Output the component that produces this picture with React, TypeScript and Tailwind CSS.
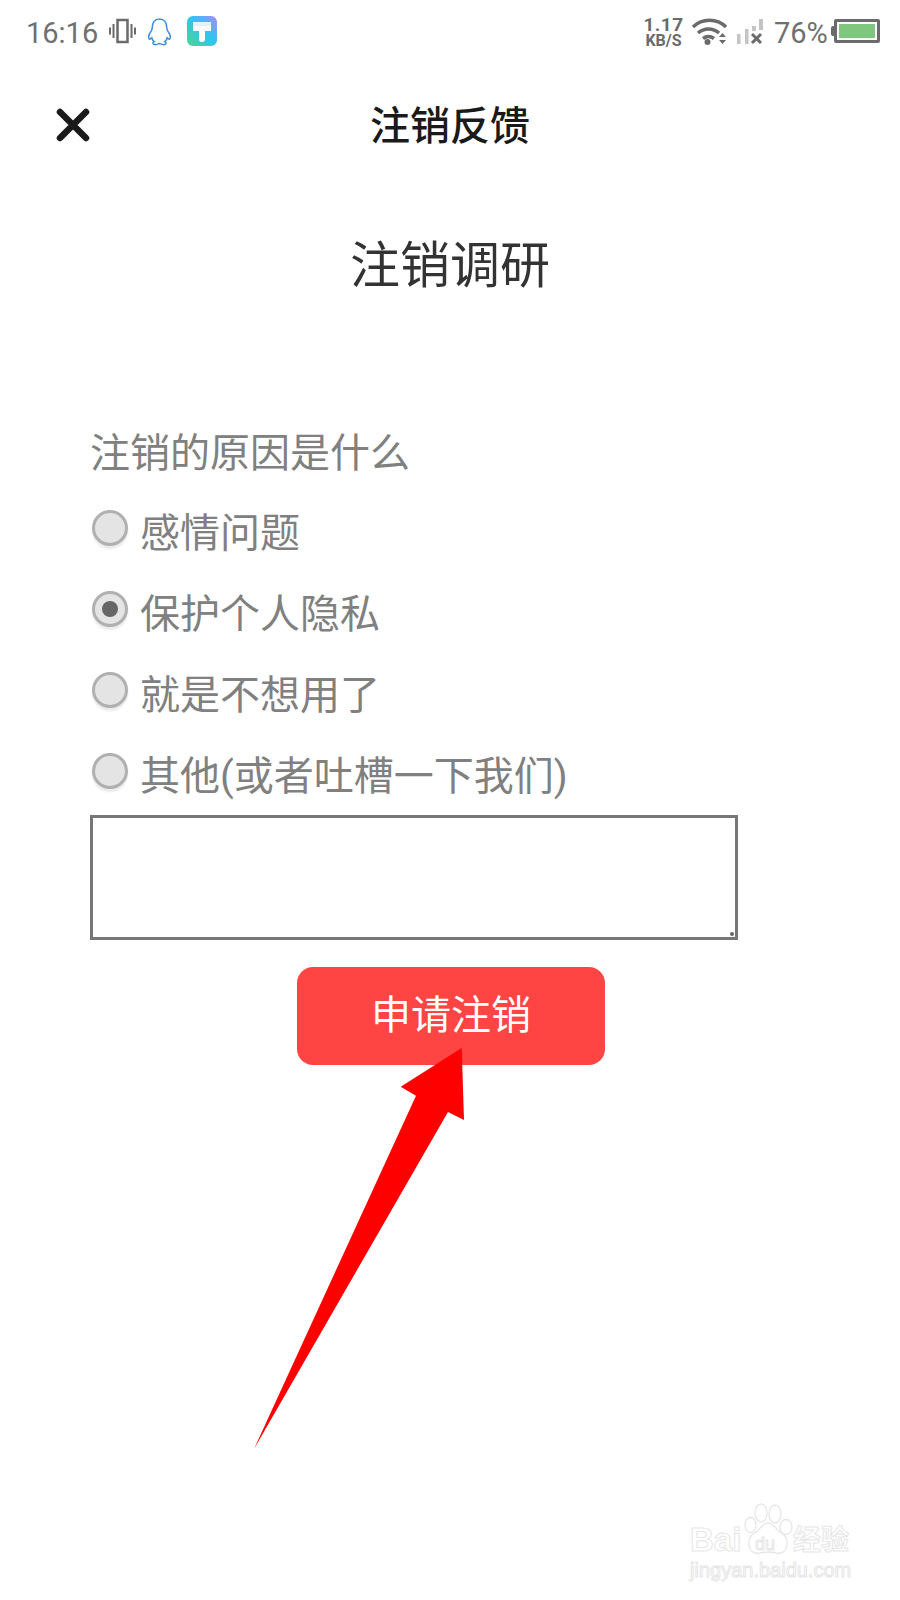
const cjk = "font-['Roboto','Noto_Sans_CJK_SC','Noto_Sans',sans-serif]";

function Radio({ checked }: { checked?: boolean }) {
  return (
    <span className="flex h-[36px] w-[36px] shrink-0 items-center justify-center rounded-full border-[3px] border-[#b0b0b0] bg-[#e4e4e4] shadow-[0_3px_2px_#ebebeb]">
      {checked && <span className="h-[16px] w-[16px] rounded-full bg-[#666666]" />}
    </span>
  );
}

function Option({ label, checked }: { label: string; checked?: boolean }) {
  return (
    <div className="flex h-[81px] items-center gap-[12px]">
      <div className="-mt-[12px]">
        <Radio checked={checked} />
      </div>
      <span className="text-[40px] leading-[50px] text-[#808080]">{label}</span>
    </div>
  );
}

function StatusBar() {
  return (
    <div className="flex h-[66px] items-center justify-between pb-[4px] pl-[26px] pr-[20px]">
      <div className="flex items-center">
        <span className="mt-[3px] text-[29px] leading-[36px] text-[#707070]">16:16</span>
        <svg width="27" height="26" viewBox="0 0 27 26" className="ml-[11px]" fill="none" stroke="#6b6b6b">
          <rect x="8.500" y="2" width="10" height="22" strokeWidth="2.500" />
          <path d="M4.500 6v14M1 9.500v7M22.500 6v14M26 9.500v7" strokeWidth="2" />
        </svg>
        <svg width="27" height="29" viewBox="0 0 28 30" className="ml-[10px]" fill="none" stroke="#3d8fd9" strokeWidth="1.600">
          <path d="M14 2c5 0 7.500 4 7.500 9 0 2 .5 3 2 5s2.500 6 1 7c-1 .5-2-1-2.500-1.500-.5 2-1 3-2.500 4 1.500.8 2 2.500 0 3-2.500.5-4-.5-5.500-1-1.500.5-3 1.500-5.500 1-2-.5-1.500-2.200 0-3-1.500-1-2-2-2.500-4-.5.500-1.500 2-2.500 1.500-1.500-1-.5-5 1-7s2-3 2-5c0-5 2.500-9 7.500-9Z" />
        </svg>
        <svg width="30" height="30" viewBox="0 0 30 30" className="ml-[14px]">
          <defs>
            <linearGradient id="tile" x1="0" y1="1" x2="1" y2="0">
              <stop offset="0" stopColor="#46d98f" />
              <stop offset="0.55" stopColor="#2fc4f2" />
              <stop offset="1" stopColor="#a88cf5" />
            </linearGradient>
          </defs>
          <rect width="30" height="30" rx="6" fill="url(#tile)" />
          <path d="M6 6h18v4H6z" fill="#dff3fb" />
          <path d="M6 10h18v5h-6v8a3 3 0 0 1-6 0v-8H6z" fill="#ffffff" />
        </svg>
      </div>
      <div className="flex items-center">
        <div className="mt-[3px] flex w-[39px] flex-col items-center text-[#6b6b6b]">
          <span className="text-[19px] font-bold leading-[16px] tracking-[0.5px]">1.17</span>
          <span className="text-[16px] font-bold leading-[15px]">KB/S</span>
        </div>
        <svg width="36" height="27" viewBox="0 0 36 27" className="ml-[9px]" fill="none" stroke="#6b6b6b" strokeWidth="3.500">
          <path d="M1 9C10 0 25 0 34 9M6 15c6-5.500 15-5.500 21 0M11 20.500c3.500-2.500 7.500-2.500 11 0" />
          <circle cx="15.500" cy="24" r="3" fill="#6b6b6b" stroke="none" />
          <path d="M27 19l3.500-4 3.500 4zM27 22h7l-3.500 4z" fill="#6b6b6b" stroke="none" />
        </svg>
        <svg width="28" height="27" viewBox="0 0 28 27" className="ml-[8px]">
          <rect x="1" y="16" width="3.500" height="10" fill="#c4c4c4" />
          <rect x="9" y="11" width="3.500" height="15" fill="#c4c4c4" />
          <rect x="16" y="8" width="4" height="5" fill="#c4c4c4" />
          <rect x="23" y="1" width="4" height="11" fill="#c4c4c4" />
          <path d="M16 16l9 9M25 16l-9 9" stroke="#6b6b6b" strokeWidth="3" />
        </svg>
        <span className="ml-[10px] mt-[3px] w-[54px] text-[29px] leading-[36px] text-[#707070]">76%</span>
        <div className="ml-[3px] flex items-center">
          <span className="h-[10px] w-[3px] rounded-l-[2px] bg-[#6b6b6b]" />
          <div className="h-[24px] w-[46px] rounded-[2px] border-[3px] border-[#6b6b6b] bg-white p-[2px]">
            <div className="h-full w-full bg-[#7fc77f]" />
          </div>
        </div>
      </div>
    </div>
  );
}

function Watermark() {
  const outline = "text-white [-webkit-text-stroke:1px_#e6e6e6]";
  return (
    <div className="absolute left-[688px] top-[1500px] h-[90px] w-[170px]">
      <span className={`absolute left-[2px] top-[20px] font-['Liberation_Sans',sans-serif] text-[33px] font-bold leading-[40px] ${outline}`}>Bai</span>
      <svg width="50" height="56" viewBox="0 0 50 56" className="absolute left-[56px] top-[2px]" fill="#ffffff" stroke="#e6e6e6" strokeWidth="1.300">
        <ellipse cx="6.500" cy="23" rx="5.500" ry="7.500" />
        <ellipse cx="17" cy="11" rx="6" ry="9" />
        <ellipse cx="31" cy="12" rx="6" ry="9" />
        <ellipse cx="42" cy="25" rx="6" ry="7.500" />
        <path d="M24 21c6 0 7 6 12 9 6 3.500 8 8 7 13-1 7-6 9-11 8-3-.7-5-1-8-1s-5 .3-8 1c-5 1-10-1-11-8-1-5 1-9.500 7-13 5-3 6-9 12-9Z" />
      </svg>
      <span className={`absolute left-[67px] top-[34px] font-['Liberation_Sans',sans-serif] text-[18px] leading-[20px] ${outline}`}>du</span>
      <span className={`absolute left-[105px] top-[25px] text-[28px] font-bold leading-[32px] ${outline}`}>经验</span>
      <span className={`absolute left-[2px] top-[58px] font-['Liberation_Sans',sans-serif] text-[20px] leading-[24px] ${outline}`}>jingyan.baidu.com</span>
    </div>
  );
}

export default function App() {
  return (
    <div className={`relative h-[1600px] w-[900px] overflow-hidden bg-white ${cjk}`}>
      <StatusBar />

      <header className="relative flex h-[120px] items-center justify-center pt-[2px]">
        <svg width="36" height="36" viewBox="0 0 36 36" className="absolute left-[55px] top-[41px]" fill="none" stroke="#1a1a1a" strokeWidth="6.500" strokeLinecap="round">
          <path d="M5 5l26 26M31 5L5 31" />
        </svg>
        <h1 className="text-[40px] font-medium leading-[50px] text-[#1a1a1a]">注销反馈</h1>
      </header>

      <h2 className="mt-[48px] text-center text-[50px] font-normal leading-[64px] text-[#333333]">注销调研</h2>

      <section className="mt-[131px] pl-[90px]">
        <p className="text-[40px] leading-[50px] text-[#808080]">注销的原因是什么</p>
        <div className="mt-[14px] flex flex-col pl-[2px]">
          <Option label="感情问题" />
          <Option label="保护个人隐私" checked />
          <Option label="就是不想用了" />
          <Option label="其他(或者吐槽一下我们)" />
        </div>
        <div className="relative -mt-[2px] h-[125px] w-[648px] border-[3px] border-[#777777] bg-white">
          <span className="absolute bottom-[1px] right-[1px] h-[4px] w-[4px] rounded-full bg-[#666666]" />
        </div>
      </section>

      <div className="mt-[27px] flex justify-center pl-[2px]">
        <button className="flex h-[98px] w-[308px] items-center justify-center rounded-[16px] bg-[#ff4444] text-[40px] leading-[50px] text-white">
          申请注销
        </button>
      </div>

      <svg width="900" height="1600" viewBox="0 0 900 1600" className="absolute left-0 top-0">
        <path d="M461.700 1048L400.700 1086.700L416 1095.700L254 1449L448 1112L464 1120Z" fill="#ff0000" />
      </svg>

      <Watermark />
    </div>
  );
}
